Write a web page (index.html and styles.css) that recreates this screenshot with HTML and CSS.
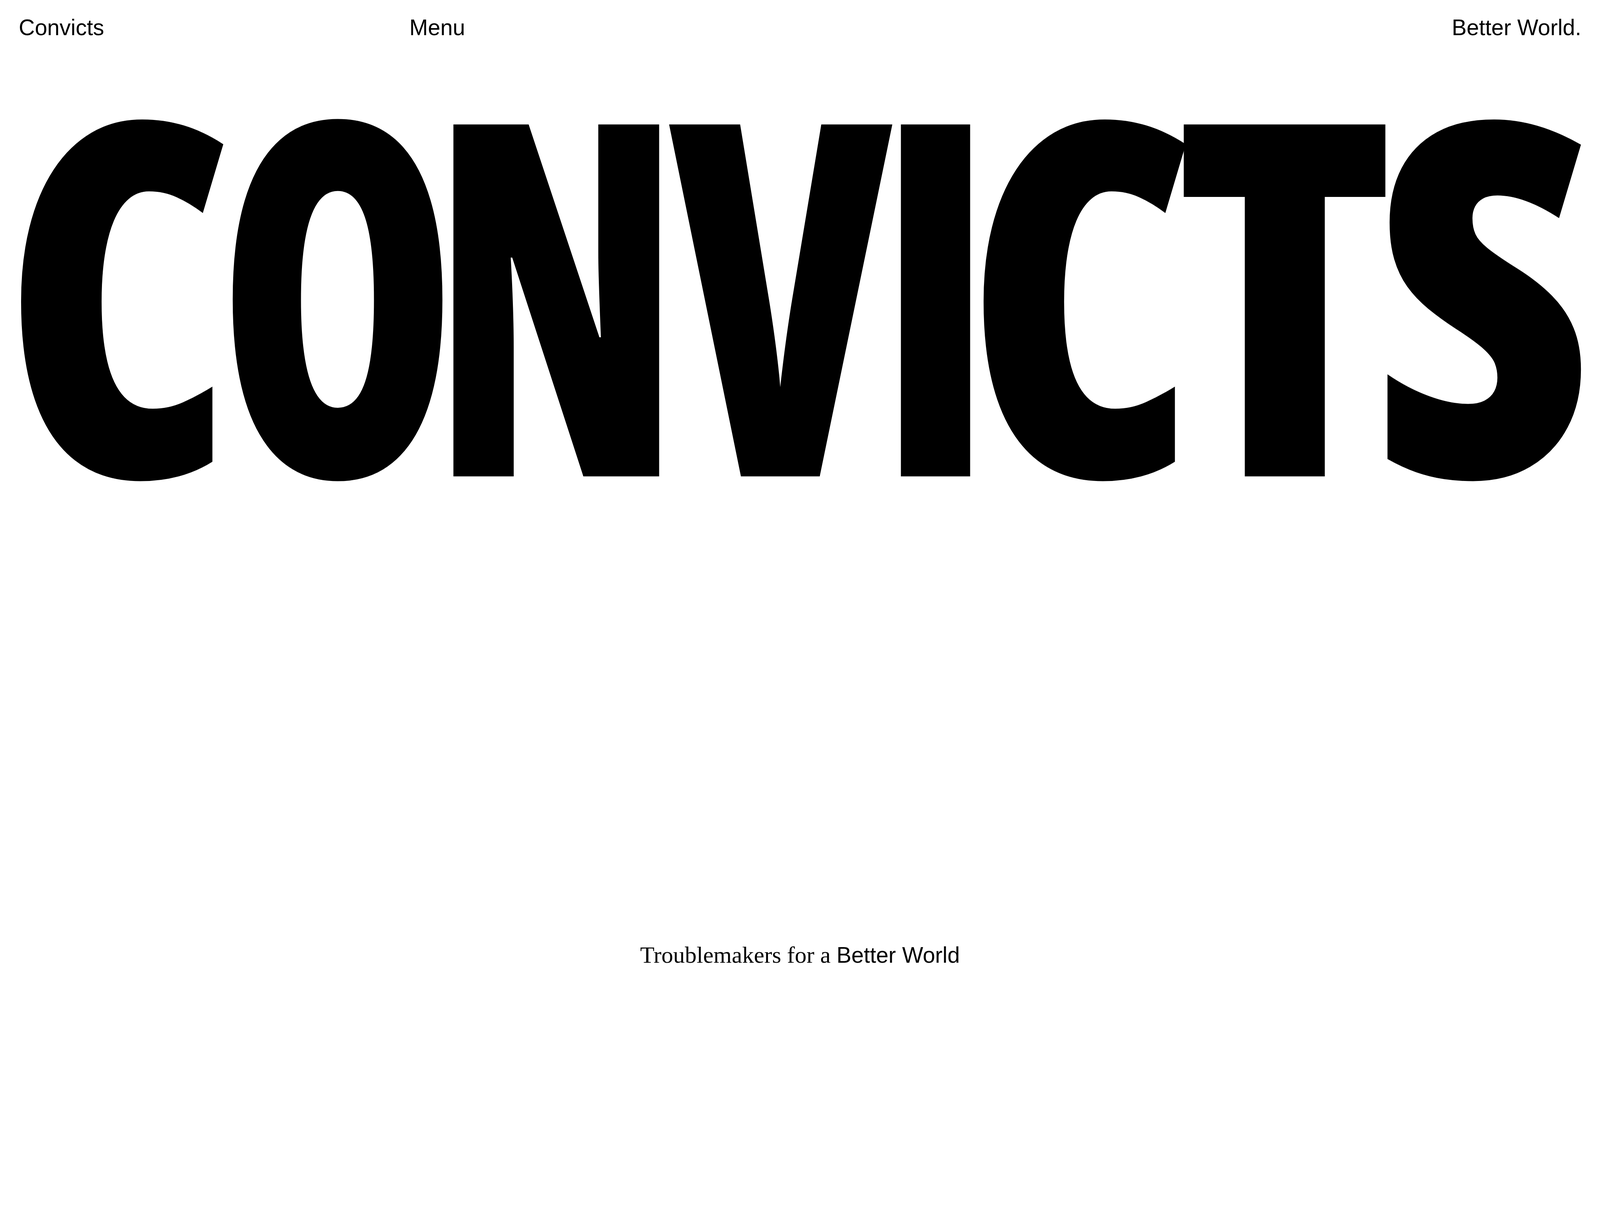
FILE: index.html
```html
<!DOCTYPE html>
<html lang="en">
<head>
<meta charset="utf-8">
<title>Convicts — Troublemakers for a Better World</title>
<link rel="stylesheet" href="styles.css">
</head>
<body>
<div class="page">
  <header class="nav">
    <a class="nav-link brand" href="#">Convicts</a>
    <a class="nav-link menu" href="#">Menu</a>
    <span class="nav-empty"></span>
    <a class="nav-link tag" href="#">Better World.</a>
  </header>
  <main class="hero">
    <h1 class="title"><span class="title-word"><span class="ch ch-c">C</span><span class="ch ch-o">O</span><span class="ch ch-n">N</span><span class="ch ch-v">V</span><span class="ch ch-i">I</span><span class="ch ch-c ch-c2">C</span><span class="ch ch-t">T</span><span class="ch ch-s">S</span></span></h1>
  </main>
  <footer class="foot">
    <p class="tagline"><span class="serif">Troublemakers for a </span><span class="sans">Better World</span></p>
  </footer>
</div>
</body>
</html>
```
FILE: styles.css
```css
html, body {
  margin: 0;
  padding: 0;
  background: #ffffff;
}

body {
  color: #000000;
  font-family: "Liberation Sans", Arial, sans-serif;
}

.page {
  height: 2560px;
  display: flex;
  flex-direction: column;
  overflow: hidden;
}

/* top bar */
.nav {
  display: grid;
  grid-template-columns: repeat(4, 1fr);
  padding: 36px 48px 0;
  font-size: 57px;
  line-height: 68px;
}

.nav-link {
  color: #000000;
  text-decoration: none;
}

.tag {
  justify-self: end;
}

/* giant wordmark */
.hero {
  padding: 0 52px;
  margin-top: 121px;
}

.title {
  margin: 0;
  font-family: "Open Sans", "Liberation Sans", sans-serif;
  font-weight: 800;
  font-stretch: 75%;
  font-size: 1090px;
  line-height: 872px;
  letter-spacing: -0.046em;
  white-space: nowrap;
}

.title-word {
  display: block;
  margin: 0 -52px 0 -26px;
  transform-origin: left top;
  transform: scaleY(1.1574);
}

.ch {
  display: inline-block;
  transform-origin: center top;
}

.ch-c { transform: scaleX(1.07); }
.ch-o { transform: scaleX(0.907); }
.ch-n { transform: scaleX(0.898); margin-left: -86px; }
.ch-v { transform: scaleX(0.936); margin-left: -39px; }
.ch-i { transform: scaleX(0.957); margin-left: -16px; }
.ch-c2 { margin-left: -13px; }
.ch-t { transform: scaleX(1.112); margin-left: 43px; }
.ch-s { transform: scaleX(1.132); margin-left: 60px; }

/* bottom tagline */
.foot {
  margin-top: auto;
  padding-bottom: 79px;
  display: flex;
  justify-content: center;
}

.tagline {
  margin: 0;
  font-family: "Liberation Sans", Arial, sans-serif;
  font-size: 57px;
  line-height: 74px;
}

.serif {
  font-family: "Liberation Serif", "Times New Roman", serif;
  font-size: 60px;
}

.sans {
  font-family: "Liberation Sans", Arial, sans-serif;
  font-size: 57px;
}
```
